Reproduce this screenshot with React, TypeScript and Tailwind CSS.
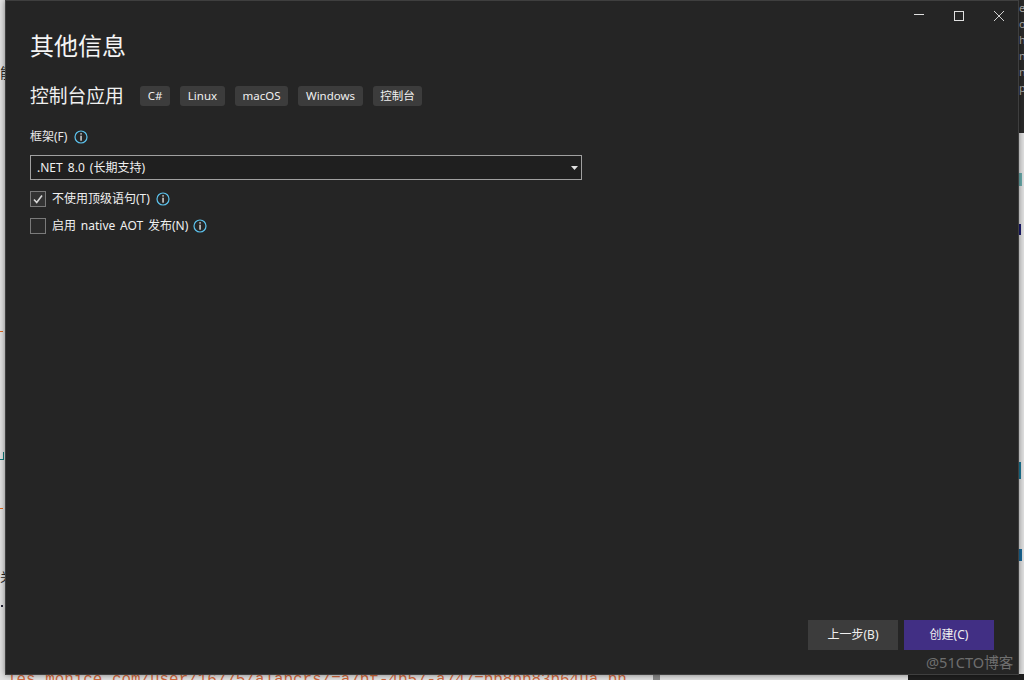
const sans = '"Noto Sans", "Noto Sans CJK SC", sans-serif';

function Info({ size = 14 }: { size?: number }) {
  return (
    <svg width={size} height={size} viewBox="0 0 14 14" fill="none" className="shrink-0">
      <circle cx="7" cy="7" r="6" stroke="#5cc3ee" strokeWidth="1.2" />
      <rect x="6.4" y="3.2" width="1.3" height="1.4" fill="#f0f0f0" />
      <rect x="6.4" y="5.7" width="1.3" height="5" fill="#f0f0f0" />
    </svg>
  );
}

function Tag({ children, w }: { children: string; w: string }) {
  return (
    <span className={`flex h-5 items-center justify-center rounded-[3px] bg-[#3c3c3c] text-[11.5px] text-[#f0f0f0] ${w}`}>
      {children}
    </span>
  );
}

export default function App() {
  return (
    <div className="relative h-[680px] w-[1024px] overflow-hidden bg-[#e2e2e2]" style={{ fontFamily: sans }}>
      {/* backdrop fragments */}
      <div className="absolute right-0 top-0 h-[133px] w-[6px] overflow-hidden bg-[#2a2a2a] text-[11px] leading-[16px] text-[#b0b0b0]">
        <div className="pl-px">e<br />o<br />h<br />n<br />n<br />p</div>
      </div>
      <div className="absolute right-[2px] top-[173px] h-[13px] w-[3px] bg-[#1a8a8a] opacity-60" />
      <div className="absolute right-[3px] top-[224px] h-[11px] w-[2px] bg-[#1a1a70]" />
      <div className="absolute right-[3px] top-[462px] h-[17px] w-[2px] bg-[#1a7a9a]" />
      <div className="absolute right-[2px] top-[549px] h-[12px] w-[3px] bg-[#1a6a9a]" />
      <div className="absolute left-0 top-[508px] h-px w-[3px] bg-[#e06a20]" />
      <div className="absolute left-0 top-[331px] h-px w-[3px] bg-[#e06a20]" />
      <div className="absolute left-0 top-[452px] h-[8px] w-[4px] border-b border-r border-[#0e7a7a]" />
      <div className="absolute left-0 top-[572px] text-[12px] leading-none text-[#222]">关</div>
      <div className="absolute left-0 top-[66px] text-[14px] leading-none text-[#222]">能</div>
      <div className="absolute left-[1px] top-[605px] h-[2px] w-[2px] bg-[#223]" />
      <div className="absolute bottom-0 right-0 h-[6px] w-[116px] bg-[#1f1f1f]" />
      <div className="absolute bottom-0 left-[653px] h-[6px] w-[7px] bg-[#8a8a8a]" />
      <div
        className="absolute left-[7px] top-[670px] whitespace-pre text-[15.9px] leading-[20px] text-[#d2693c]"
        style={{ fontFamily: '"Liberation Mono", monospace' }}
      >
        les.monice.com/user/16775/alapcrs/=a7bf-4b57-a747=bb8bb83b64ua.pn
      </div>

      {/* dialog */}
      <div className="relative ml-[5px] flex h-[675px] w-[1014px] flex-col border border-[#3f3f3f] bg-[#252525] pl-[24px] pr-[24px] shadow-[0_0_6px_rgba(0,0,0,0.45)]">
        <div className="absolute right-[-1px] top-0 flex h-[30px] items-center text-[#e0e0e0]">
          <div className="flex w-[40px] justify-center">
            <svg width="12" height="12" viewBox="0 0 12 12"><path d="M1 4.5h10" stroke="#e0e0e0" /></svg>
          </div>
          <div className="flex w-[40px] justify-center">
            <svg width="12" height="12" viewBox="0 0 12 12" fill="none"><rect x="1.5" y="1.5" width="9" height="9" stroke="#e0e0e0" /></svg>
          </div>
          <div className="flex w-[40px] justify-center">
            <svg width="12" height="12" viewBox="0 0 12 12" fill="none"><path d="M1 1l10 10M11 1L1 11" stroke="#d0d0d0" /></svg>
          </div>
        </div>

        <h1 className="mt-[28px] text-[24px] font-normal leading-[34px] text-[#f4f4f4]">其他信息</h1>

        <div className="mt-[19px] flex h-[28px] items-center">
          <span className="w-[110px] text-[18.8px] leading-[28px] text-[#f0f0f0]">控制台应用</span>
          <div className="flex gap-[10px]">
            <Tag w="w-[30px]">C#</Tag>
            <Tag w="w-[45px]">Linux</Tag>
            <Tag w="w-[53px]">macOS</Tag>
            <Tag w="w-[65px]">Windows</Tag>
            <Tag w="w-[49px]">控制台</Tag>
          </div>
        </div>

        <div className="mt-[17px] flex h-[20px] items-center gap-[7px] text-[12px] text-[#e8e8e8]">
          框架(F)
          <Info />
        </div>

        <div className="mt-[8px] flex h-[25px] w-[552px] items-center justify-between border border-[#a0a0a0] bg-[#1f1f1f] pl-[6px] pr-[3px] text-[12px] text-[#f0f0f0]">
          <span className="[word-spacing:2px]">.NET 8.0 (长期支持)</span>
          <svg width="7" height="4" viewBox="0 0 7 4"><path d="M0 0h7L3.5 4z" fill="#e0e0e0" /></svg>
        </div>

        <label className="mt-[9px] flex h-[19px] items-center text-[12px] text-[#f0f0f0]">
          <span className="mr-[6px] flex h-4 w-4 items-center justify-center border border-[#7a7a7a] bg-[#333333]">
            <svg width="12" height="12" viewBox="0 0 12 12" fill="none"><path d="M2 6.5l2.7 3L10 2.5" stroke="#d8d8d8" strokeWidth="1.6" /></svg>
          </span>
          不使用顶级语句(T)
          <span className="ml-[6px]"><Info /></span>
        </label>

        <label className="mt-[8px] flex h-[19px] items-center text-[12px] text-[#f0f0f0]">
          <span className="mr-[6px] h-4 w-4 border border-[#7a7a7a] bg-[#2a2a2a]" />
          <span className="[word-spacing:1.7px]">启用 native AOT 发布(N)</span>
          <span className="ml-[5px]"><Info /></span>
        </label>

        <div className="mt-auto mb-[24px] flex justify-end gap-[6px]">
          <button className="h-[30px] w-[90px] bg-[#3c3c3c] text-[12px] text-[#f0f0f0]">上一步(B)</button>
          <button className="h-[30px] w-[90px] bg-[#412f84] text-[12px] text-[#f0f0f0]">创建(C)</button>
        </div>
      </div>

      <div className="absolute left-[926px] top-[653px] text-[14.6px] leading-[18px] text-[#6e6e6e]">@51CTO博客</div>
    </div>
  );
}
